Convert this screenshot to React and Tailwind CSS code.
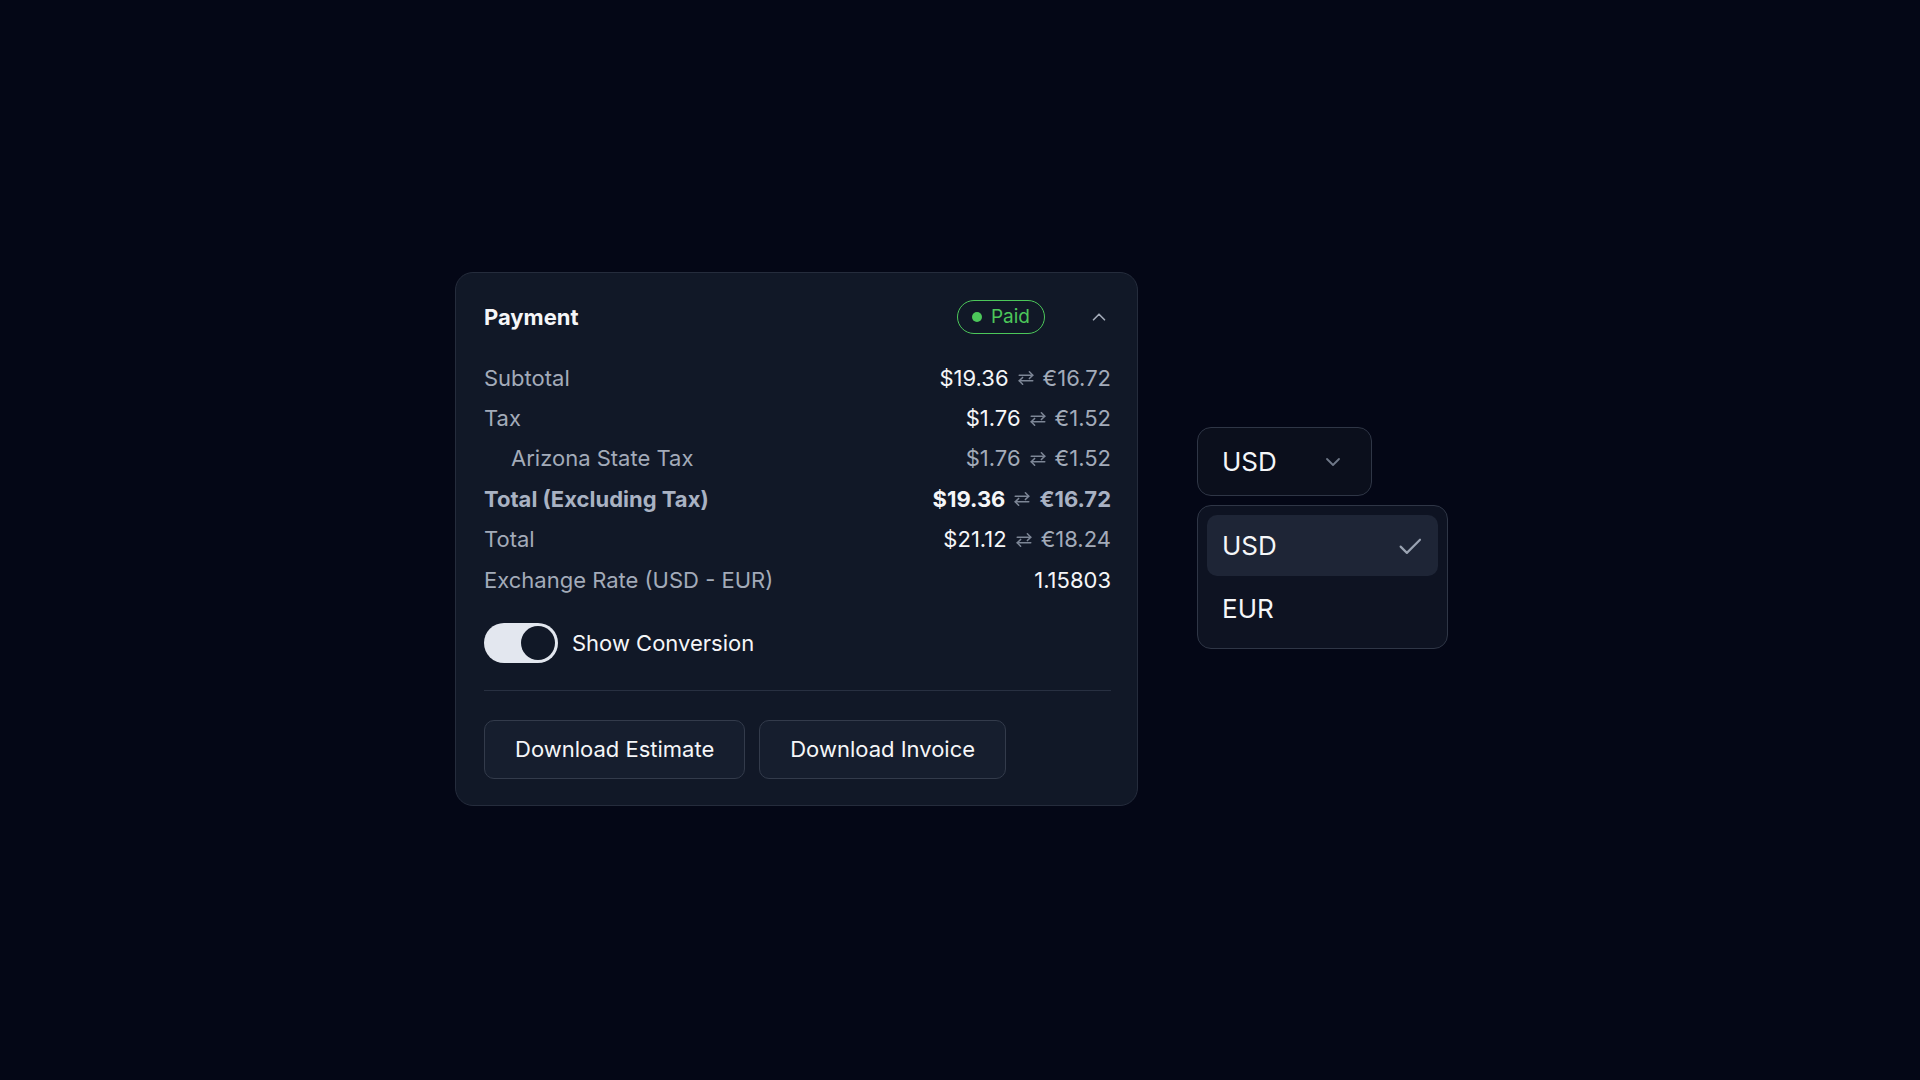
import React from "react";

const font = { fontFamily: "Inter, 'Noto Sans', sans-serif" };

function SwapArrows({ className = "" }) {
  return (
    <svg viewBox="0 0 16 16" className={className} fill="none" stroke="currentColor" strokeWidth="1.4" strokeLinecap="round" strokeLinejoin="round">
      <path d="M2 5.5h12" />
      <path d="M11 2.5l3 3-3 3" />
      <path d="M14 10.5H2" />
      <path d="M5 7.5l-3 3 3 3" />
    </svg>
  );
}

function Amount({ usd, eur, usdClass, eurClass, bold }) {
  return (
    <div className={`flex items-center gap-[8px] ${bold ? "font-bold" : ""}`}>
      <span className={usdClass}>{usd}</span>
      <SwapArrows className="w-[18px] h-[18px] text-[#7d8696]" />
      <span className={eurClass}>{eur}</span>
    </div>
  );
}

function Row({ children }) {
  return <div className="flex items-center justify-between h-[40.4px]">{children}</div>;
}

export default function App() {
  return (
    <div className="min-h-screen bg-[#040716] text-white" style={font}>
      <div className="flex items-start pt-[272px] pl-[455px] gap-[59px]">
        {/* Payment card */}
        <div className="w-[683px] rounded-[18px] border border-[#252c3c] bg-[#111827] pl-[28px] pr-[26px] pt-[27px] pb-[26px]">
          <div className="flex items-center h-[34px]">
            <div className="text-[22px] font-bold text-[#f5f6f8]">Payment</div>
            <div className="ml-auto flex items-center h-[34px] rounded-full border-[1.5px] border-[#4cc75a] pl-[14px] pr-[14px] gap-[9px]">
              <span className="w-[10px] h-[10px] rounded-full bg-[#4cc75a]" />
              <span className="text-[19px] text-[#4cc75a]">Paid</span>
            </div>
            <div className="ml-[42px] w-[24px] h-[24px] flex items-center justify-center text-[#a3abb9]">
              <svg viewBox="0 0 24 24" className="w-[22px] h-[22px]" fill="none" stroke="currentColor" strokeWidth="1.8" strokeLinecap="round" strokeLinejoin="round">
                <path d="M6 15l6-6 6 6" />
              </svg>
            </div>
          </div>

          <div className="mt-[24px] flex flex-col text-[22px]">
            <Row>
              <span className="text-[#a3abb9]">Subtotal</span>
              <Amount usd="$19.36" eur="€16.72" usdClass="text-[#f5f6f8]" eurClass="text-[#a3abb9]" />
            </Row>
            <Row>
              <span className="text-[#a3abb9]">Tax</span>
              <Amount usd="$1.76" eur="€1.52" usdClass="text-[#f5f6f8]" eurClass="text-[#a3abb9]" />
            </Row>
            <Row>
              <span className="pl-[27px] text-[#a3abb9]">Arizona State Tax</span>
              <Amount usd="$1.76" eur="€1.52" usdClass="text-[#a3abb9]" eurClass="text-[#a3abb9]" />
            </Row>
            <Row>
              <span className="font-bold text-[#a9b2c3]">Total (Excluding Tax)</span>
              <Amount bold usd="$19.36" eur="€16.72" usdClass="text-[#f5f6f8]" eurClass="text-[#a9b2c3]" />
            </Row>
            <Row>
              <span className="text-[#a3abb9]">Total</span>
              <Amount usd="$21.12" eur="€18.24" usdClass="text-[#f5f6f8]" eurClass="text-[#a3abb9]" />
            </Row>
            <Row>
              <span className="text-[#a3abb9]">Exchange Rate (USD - EUR)</span>
              <span className="text-[#f5f6f8]">1.15803</span>
            </Row>
          </div>

          <div className="mt-[23px] flex items-center gap-[14px]">
            <div className="w-[74px] h-[40px] rounded-full bg-[#e3e7ef] p-[3px] flex justify-end">
              <div className="w-[34px] h-[34px] rounded-full bg-[#111827]" />
            </div>
            <span className="text-[22px] text-[#f5f6f8]">Show Conversion</span>
          </div>

          <div className="mt-[27px] h-px bg-[#283041]" />

          <div className="mt-[29px] flex gap-[14px]">
            <button className="h-[59px] px-[30px] rounded-[10px] border border-[#333b4b] bg-[#161e2e] text-[22px] text-[#f5f6f8]">
              Download Estimate
            </button>
            <button className="h-[59px] px-[30px] rounded-[10px] border border-[#333b4b] bg-[#161e2e] text-[22px] text-[#f5f6f8]">
              Download Invoice
            </button>
          </div>
        </div>

        {/* Currency select */}
        <div className="mt-[155px] flex flex-col gap-[9px]">
          <div className="w-[175px] h-[69px] rounded-[14px] border border-[#2f3646] bg-[#0b0f1c] flex items-center pl-[24px] pr-[26px]">
            <span className="text-[26px] text-[#f5f6f8]">USD</span>
            <svg viewBox="0 0 24 24" className="ml-auto w-[24px] h-[24px] text-[#6f7888]" fill="none" stroke="currentColor" strokeWidth="1.8" strokeLinecap="round" strokeLinejoin="round">
              <path d="M6 9l6 6 6-6" />
            </svg>
          </div>
          <div className="w-[251px] rounded-[14px] border border-[#2f3646] bg-[#0e1322] p-[9px] flex flex-col gap-[2px]">
            <div className="h-[61px] rounded-[10px] bg-[#1e2536] flex items-center pl-[15px] pr-[13px]">
              <span className="text-[26px] text-[#f5f6f8]">USD</span>
              <svg viewBox="0 0 24 24" className="ml-auto w-[30px] h-[30px] text-[#9aa3b2]" fill="none" stroke="currentColor" strokeWidth="1.7" strokeLinecap="round" strokeLinejoin="round">
                <path d="M4.5 12.5l5 5L20 7" />
              </svg>
            </div>
            <div className="h-[61px] rounded-[10px] flex items-center pl-[15px]">
              <span className="text-[26px] text-[#f5f6f8]">EUR</span>
            </div>
          </div>
        </div>
      </div>
    </div>
  );
}
